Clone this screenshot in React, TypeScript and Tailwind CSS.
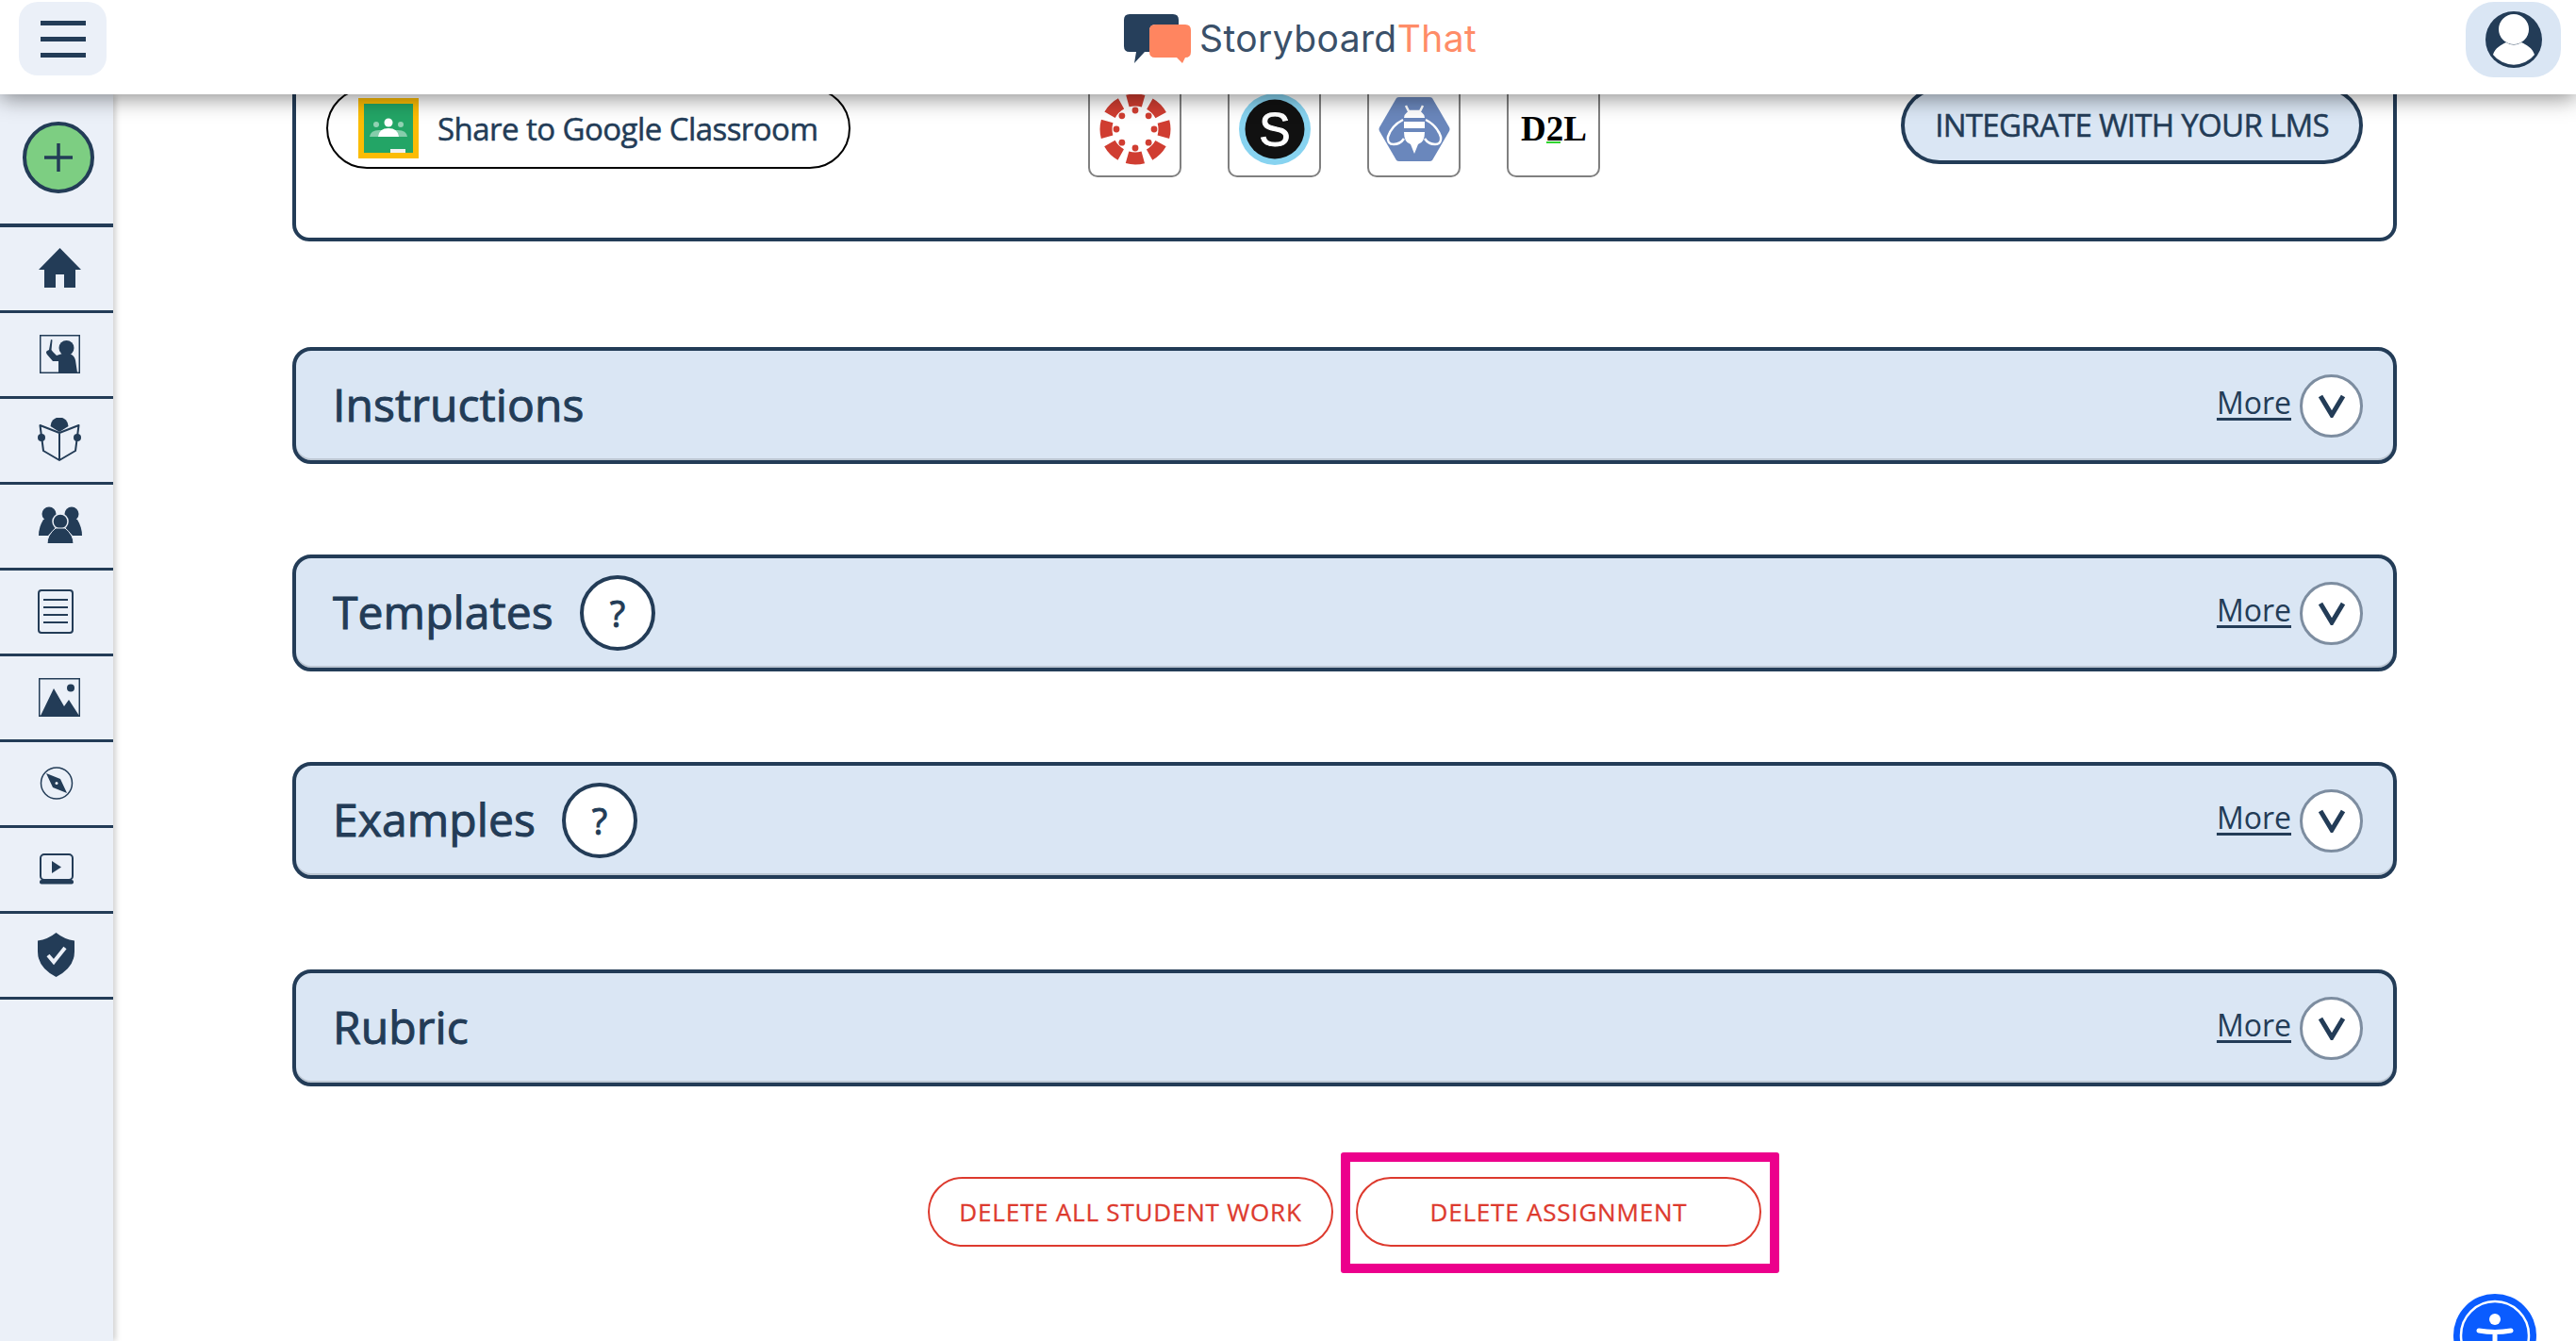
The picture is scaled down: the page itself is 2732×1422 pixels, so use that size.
import React from 'react';

const DARK = '#233c57';

const HomeIcon = () => (
  <svg width="45" height="42" viewBox="0 0 45 42" fill={DARK}>
    <path d="M22.5 0 L45 23 H39 V42 H27 V28 H18 V42 H6 V23 H0 Z" />
  </svg>
);

const TeacherIcon = () => (
  <svg width="43" height="41" viewBox="0 0 43 41" fill={DARK}>
    <rect x="0.75" y="0.75" width="41.5" height="39.5" fill="none" stroke={DARK} strokeWidth="1.5" />
    <circle cx="28.5" cy="14" r="8" />
    <path d="M12 5 L13.5 5.5 L12.5 16 L14 18 L18 22 L24 20 L32 20 Q37 22 38 27 L40 40 H20 V28 L14 28 L8 21 Q6 18 8 17 L10 16 Z" />
  </svg>
);

const ReaderIcon = () => (
  <svg width="46" height="46" viewBox="0 0 46 46">
    <path d="M13.5 9 A9.5 9.5 0 0 1 32.5 9 L23 15 Z" fill={DARK} />
    <path d="M23 16 L2.5 8 L6 35 L23 45 L40 35 L43.5 8 Z M23 16 V45" fill="none" stroke={DARK} strokeWidth="2" strokeLinejoin="round" />
    <circle cx="4" cy="21" r="4" fill={DARK} />
    <circle cx="42" cy="21" r="4" fill={DARK} />
  </svg>
);

const GroupIcon = () => (
  <svg width="46" height="40" viewBox="0 0 46 40" fill={DARK}>
    <circle cx="11" cy="8" r="7.5" />
    <path d="M5 14 L17 14 Q21 20 17 24 L10 31 H0 Q0 22 5 14 Z" />
    <circle cx="35" cy="8" r="7.5" />
    <path d="M29 14 L41 14 Q46 22 46 31 H36 L29 24 Q25 20 29 14 Z" />
    <circle cx="23" cy="16" r="8" stroke="#ebf0f8" strokeWidth="1.5" />
    <path d="M18 23 L28 23 Q32 26 35 31 Q37 35 37 39.5 H9 Q9 35 11 31 Q14 26 18 23 Z" stroke="#ebf0f8" strokeWidth="1" />
  </svg>
);

const DocIcon = () => (
  <svg width="38" height="47" viewBox="0 0 38 47" fill="none" stroke={DARK}>
    <rect x="1" y="1" width="36" height="45" rx="3" strokeWidth="2" />
    <path d="M6 11 H32 M6 19 H32 M6 27 H32 M6 35 H32" strokeWidth="2" />
  </svg>
);

const ImageIcon = () => (
  <svg width="44" height="41" viewBox="0 0 44 41">
    <rect x="0.75" y="0.75" width="42.5" height="39.5" fill="none" stroke={DARK} strokeWidth="1.5" />
    <circle cx="34" cy="10.5" r="4" fill={DARK} />
    <path d="M2 40 L16 11 L27 30 L32 23 L43 40 Z" fill={DARK} />
  </svg>
);

const CompassIcon = () => (
  <svg width="36" height="35" viewBox="0 0 36 35">
    <circle cx="18" cy="17.5" r="16.5" fill="none" stroke={DARK} strokeWidth="1.5" />
    <path d="M7 7 L22 13 L29 28 L14 22 Z" fill={DARK} />
    <circle cx="18" cy="17.5" r="1.5" fill="#ebf0f8" />
  </svg>
);

const VideoIcon = () => (
  <svg width="36" height="33" viewBox="0 0 36 33">
    <rect x="1" y="1" width="34" height="27" rx="4" fill="none" stroke={DARK} strokeWidth="2" />
    <path d="M13 8 L23 14.5 L13 21 Z" fill={DARK} />
    <rect x="0" y="28" width="36" height="4.5" rx="2" fill={DARK} />
  </svg>
);

const ShieldIcon = () => (
  <svg width="39" height="47" viewBox="0 0 39 47">
    <path d="M19.5 0 Q28 7 39 8.5 V20 Q39 37 19.5 47 Q0 37 0 20 V8.5 Q11 7 19.5 0 Z" fill={DARK} />
    <path d="M11 24 L17 31 L29 16" fill="none" stroke="#ebf0f8" strokeWidth="4" />
  </svg>
);

const navItems = [
  { icon: <HomeIcon />, cls: 'ml-[41px]' },
  { icon: <TeacherIcon />, cls: 'ml-[42px]' },
  { icon: <ReaderIcon />, cls: 'ml-[40px]' },
  { icon: <GroupIcon />, cls: 'ml-[41px]' },
  { icon: <DocIcon />, cls: 'ml-[40px]' },
  { icon: <ImageIcon />, cls: 'ml-[41px]' },
  { icon: <CompassIcon />, cls: 'ml-[42px]' },
  { icon: <VideoIcon />, cls: 'ml-[42px]' },
  { icon: <ShieldIcon />, cls: 'ml-[40px]' },
];

const Logo = () => (
  <div className="flex items-center ml-[1079px] h-[52px] mt-[15px] self-start">
    <svg width="72" height="52" viewBox="0 0 72 52">
      <path d="M6 0 H52 Q58 0 58 6 V11 H34 Q27 11 27 18 V40 H22 L11 52 L13 40 H6 Q0 40 0 34 V6 Q0 0 6 0 Z" fill="#263f5b" />
      <path d="M33 11 H65 Q71 11 71 17 V40 Q71 46 65 46 H65 L62 52 L56 46 H33 Q27 46 27 40 V17 Q27 11 33 11 Z" fill="#ff8560" />
    </svg>
    <span className="ml-[8px] mb-[2px] text-[39px] leading-none tracking-[0.4px] font-['Inter',sans-serif] text-[#3a5069]">
      Storyboard<span className="text-[#ff8c68]">That</span>
    </span>
  </div>
);

const CanvasLogo = () => {
  const petals = [0, 45, 90, 135, 180, 225, 270, 315];
  return (
    <svg width="76" height="76" viewBox="-38 -38 76 76">
      <circle r="31" fill="none" stroke="#d03d31" strokeWidth="13" strokeDasharray="17 7.35" strokeDashoffset="8.5" />
      {petals.map((a) => (
        <circle key={a} r="3.4" cx={20 * Math.cos((a * Math.PI) / 180)} cy={20 * Math.sin((a * Math.PI) / 180)} fill="#d03d31" />
      ))}
    </svg>
  );
};

const SchoologyLogo = () => (
  <svg width="76" height="76" viewBox="0 0 76 76">
    <circle cx="38" cy="38" r="38" fill="#87d3f0" />
    <circle cx="38" cy="38" r="31.5" fill="#111111" />
    <text x="38" y="56" textAnchor="middle" fontFamily="'Liberation Sans',sans-serif" fontSize="50" fill="#ffffff" stroke="#ffffff" strokeWidth="1">S</text>
  </svg>
);

const HiveLogo = () => (
  <svg width="76" height="68" viewBox="0 0 76 68">
    <path d="M19 1 Q20 0 22 0 H54 Q56 0 57 1 L75 32 Q76 34 75 36 L57 67 Q56 68 54 68 H22 Q20 68 19 67 L1 36 Q0 34 1 32 Z" fill="#6a87bc" />
    <path d="M29 9 L32 15 H44 L47 9" fill="none" stroke="#fff" strokeWidth="2.5" />
    <path d="M27 22 Q28 14 38 14 Q48 14 49 22 Z M27 26 H49 V33 H27 Z M27 37 H49 Q49 48 42 50 L38 60 L34 50 Q27 48 27 37 Z" fill="#fff" />
    <path d="M26 24 Q14 30 10 42 Q9 50 16 50 Q23 50 27 44 M50 24 Q62 30 66 42 Q67 50 60 50 Q53 50 49 44" fill="none" stroke="#fff" strokeWidth="2.5" />
  </svg>
);

const D2LLogo = () => (
  <svg width="78" height="46" viewBox="0 0 78 46">
    <text x="39" y="35" textAnchor="middle" fontFamily="'Liberation Serif',serif" fontWeight="700" fontSize="37" fill="#000000">D2L</text>
    <rect x="31" y="36" width="15" height="2" fill="#2fd42f" />
  </svg>
);

const lmsLogos = [<CanvasLogo key="c" />, <SchoologyLogo key="s" />, <HiveLogo key="h" />, <D2LLogo key="d" />];

const Section = ({ title, help }: { title: string; help?: boolean }) => (
  <div className="flex items-center h-[124px] rounded-[20px] border-4 border-[#233c57] bg-[#dae6f4] pl-[39px] pr-[32px] shadow-[inset_0_-2px_0_#bcc6d2]">
    <h2 className="mb-[3px] text-[48px] leading-none text-[#233c57] tracking-[0.1px] [-webkit-text-stroke:1px_#233c57]">{title}</h2>
    {help && (
      <div className="flex items-center justify-center w-[80px] h-[80px] ml-[28px] rounded-full border-4 border-[#233c57] bg-white text-[38px] leading-none text-[#233c57] [-webkit-text-stroke:1px_#233c57]">
        ?
      </div>
    )}
    <a className="ml-auto mr-[1px] mt-[-6px] text-[32px] leading-none underline underline-offset-[4px] text-[#233c57]">More</a>
    <div className="flex items-center justify-center w-[67px] h-[67px] ml-[8px] rounded-full border-[3px] border-[#7d8da0] bg-white">
      <svg width="30" height="26" viewBox="0 0 30 26" fill="none" stroke="#233c57" strokeWidth="5">
        <path d="M3 3 L15 23 L27 3" />
      </svg>
    </div>
  </div>
);

export default function App() {
  return (
    <div className="relative flex flex-col h-screen overflow-hidden bg-white font-['Open_Sans',sans-serif]">
      <header className="relative z-20 flex shrink-0 items-start h-[100px] bg-white shadow-[0_4px_22px_rgba(0,0,0,0.45)]">
        <button className="flex flex-col items-center justify-center gap-[12px] w-[93px] h-[78px] ml-[20px] mt-[2px] rounded-[20px] bg-[#ebf0f8]">
          <span className="block w-[48px] h-[5px] bg-[#233c57]" />
          <span className="block w-[48px] h-[5px] bg-[#233c57]" />
          <span className="block w-[48px] h-[5px] bg-[#233c57]" />
        </button>
        <Logo />
        <button className="flex items-center justify-center w-[101px] h-[80px] ml-auto mr-[16px] mt-[2px] rounded-[30px] bg-[#dae6f4]">
          <svg width="60" height="60" viewBox="0 0 60 60">
            <circle cx="30" cy="30" r="30" fill="#233c57" />
            <circle cx="30" cy="19" r="16" fill="#ffffff" />
            <path d="M8 46 C10 39 17 35 22 33 Q30 38 38 33 C43 35 50 39 52 46 A28 28 0 0 1 8 46 Z" fill="#ffffff" />
          </svg>
        </button>
      </header>

      <div className="flex flex-1 min-h-0">
        <aside className="relative z-10 shrink-0 w-[120px] bg-[#ebf0f8] shadow-[3px_0_6px_rgba(0,0,0,0.18)]">
          <div className="flex items-center justify-center h-[141px] border-b-4 border-[#233c57]">
            <button className="flex items-center justify-center w-[76px] h-[76px] mt-[-3px] ml-[3px] rounded-full border-4 border-[#233c57] bg-[#7dce82]">
              <svg width="30" height="30" viewBox="0 0 30 30" stroke="#233c57" strokeWidth="3.5">
                <path d="M15 0 V30 M0 15 H30" />
              </svg>
            </button>
          </div>
          {navItems.map((item, i) => (
            <div key={i} className="flex items-center h-[91px] pb-[2px] border-b-[3px] border-[#233c57]">
              <div className={item.cls}>{item.icon}</div>
            </div>
          ))}
        </aside>

        <main className="flex-1 min-w-0 px-[190px]">
          <section className="flex items-start h-[216px] mt-[-60px] px-[32px] rounded-[18px] border-4 border-[#233c57] bg-white">
            <button className="flex items-center w-[556px] h-[86px] mt-[49px] pl-[32px] rounded-[43px] border-2 border-black bg-white">
              <svg width="64" height="64" viewBox="0 0 64 64" className="shrink-0">
                <rect width="64" height="64" fill="#fbbc04" />
                <rect x="6" y="6" width="52" height="52" fill="#23a566" />
                <circle cx="32" cy="26" r="4.5" fill="#ffffff" />
                <circle cx="19" cy="28" r="3" fill="#ffffff" opacity="0.5" />
                <circle cx="45" cy="28" r="3" fill="#ffffff" opacity="0.5" />
                <path d="M12 41 Q13 34 22 34 H42 Q51 34 52 41 Z" fill="#ffffff" opacity="0.45" />
                <path d="M21 41 Q22 32 32 32 Q42 32 43 41 Z" fill="#ffffff" />
                <rect x="34" y="54" width="16" height="4" fill="#f1f1f1" />
              </svg>
              <span className="ml-[20px] text-[33px] leading-none whitespace-nowrap text-[#233c57] tracking-[-0.55px] [-webkit-text-stroke:0.5px_#233c57]">Share to Google Classroom</span>
            </button>

            <div className="flex gap-[49px] ml-[252px] mt-[26px]">
              {lmsLogos.map((logo, i) => (
                <div key={i} className="flex items-center justify-center w-[99px] h-[118px] pt-[16px] rounded-[10px] border-2 border-[#808080] bg-white">
                  {logo}
                </div>
              ))}
            </div>

            <button className="flex items-center justify-center w-[490px] h-[82px] ml-auto mt-[48px] pb-[2px] rounded-[41px] border-4 border-[#233c57] bg-[#dae6f4] text-[33px] leading-none whitespace-nowrap text-[#233c57] tracking-[-0.7px] [-webkit-text-stroke:0.5px_#233c57]">
              INTEGRATE WITH YOUR LMS
            </button>
          </section>

          <div className="flex flex-col gap-[96px] mt-[112px]">
            <Section title="Instructions" />
            <Section title="Templates" help />
            <Section title="Examples" help />
            <Section title="Rubric" />
          </div>

          <div className="flex justify-center gap-[24px] mt-[96px]">
            <button className="w-[430px] h-[74px] rounded-[37px] border-2 border-[#dd3a2e] bg-white text-[26px] tracking-[0.8px] whitespace-nowrap text-[#dd3a2e] [-webkit-text-stroke:0.3px_#dd3a2e]">
              DELETE ALL STUDENT WORK
            </button>
            <div className="relative">
              <button className="block w-[430px] h-[74px] rounded-[37px] border-2 border-[#dd3a2e] bg-white text-[26px] tracking-[0.8px] whitespace-nowrap text-[#dd3a2e] [-webkit-text-stroke:0.3px_#dd3a2e]">
                DELETE ASSIGNMENT
              </button>
              <div className="absolute top-[-26px] left-[-16px] right-[-19px] bottom-[-28px] rounded-[3px] border-[10px] border-[#ec008c]" />
            </div>
          </div>
        </main>
      </div>

      <div className="absolute left-[2602px] top-[1372px] z-30">
        <svg width="88" height="88" viewBox="0 0 88 88">
          <circle cx="44" cy="44" r="44" fill="#0a5cff" />
          <circle cx="44" cy="44" r="36" fill="none" stroke="#ffffff" strokeWidth="2.5" />
          <circle cx="44" cy="27" r="6" fill="#ffffff" />
          <path d="M27 39 Q44 42 61 39 M44 41 V60" fill="none" stroke="#ffffff" strokeWidth="5" strokeLinecap="round" />
        </svg>
      </div>
    </div>
  );
}
